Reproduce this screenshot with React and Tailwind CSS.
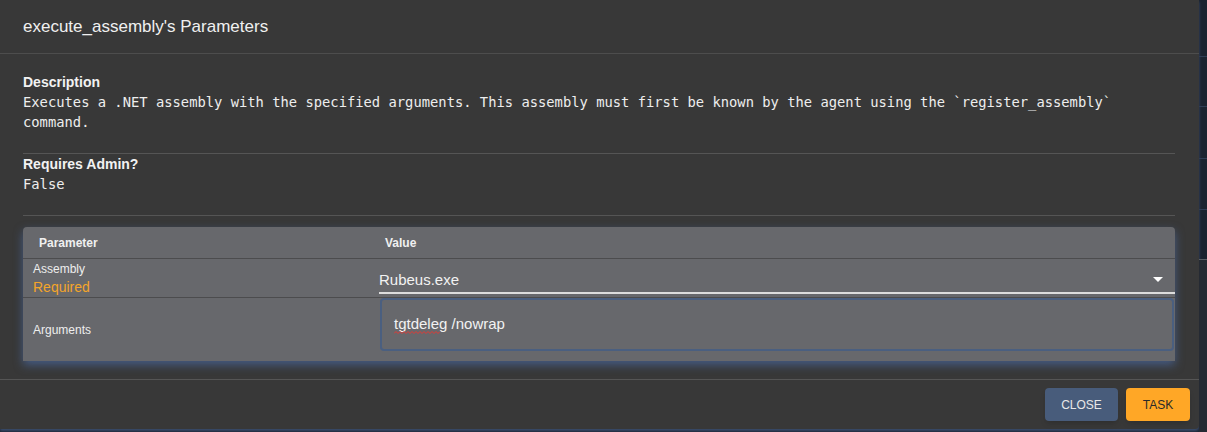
import React from 'react';

const sans = { fontFamily: '"Liberation Sans", Arial, sans-serif' };
const mono = { fontFamily: '"DejaVu Sans Mono", monospace' };

const Divider = () => <div className="h-px bg-[#555555]" />;

// red squiggle from the spell checker
const Squiggle = ({ width }) => (
  <svg className="absolute left-0 top-full -mt-[1px]" width={width} height="3" viewBox={`0 0 ${width} 3`}>
    <path
      d={Array.from({ length: Math.ceil(width / 4) }, (_, i) => `${i === 0 ? 'M' : 'L'}${i * 4} 2.5 L${i * 4 + 2} 0.5`).join(' ')}
      stroke="#e53935"
      strokeWidth="1"
      fill="none"
    />
  </svg>
);

const ParameterTable = () => (
  <div className="rounded-t-[4px] bg-[#67686c] shadow-[0_4px_10px_rgba(72,100,150,0.8)]">
    {/* Header */}
    <div className="flex h-[32px] items-center border-b border-[#4c4c4e] text-[12px] font-bold text-[#f0f0f0]">
      <div className="w-[356px] pl-4">Parameter</div>
      <div className="pl-[6px]">Value</div>
    </div>

    {/* Assembly */}
    <div className="flex h-[39px] border-b border-[#4c4c4e]">
      <div className="flex w-[356px] flex-col pl-[10px] pt-[2px]">
        <span className="text-[12px] leading-[16px] text-[#eeeeee]">Assembly</span>
        <span className="mt-[1px] text-[14px] leading-[18px] text-[#f4a52a]">Required</span>
      </div>
      <div className="mb-[3px] flex flex-1 items-center justify-between border-b-2 border-[#dddddd] pr-3">
        <span className="pt-[10px] text-[15px] text-[#f2f2f2]">Rubeus.exe</span>
        <svg width="10" height="6" viewBox="0 0 10 6" className="mt-[8px]">
          <path d="M0 0h10L5 5z" fill="#ffffff" />
        </svg>
      </div>
    </div>

    {/* Arguments */}
    <div className="flex h-[63px] pb-[10px]">
      <div className="flex w-[356px] items-center pl-[10px] pt-[10px]">
        <span className="text-[12px] text-[#eeeeee]">Arguments</span>
      </div>
      <div className="ml-px mr-px flex flex-1 items-center rounded-[4px] border-2 border-[#4a5f80] pl-3">
        <span className="text-[15px] text-[#f2f2f2]">
          <span className="relative">
            tgtdeleg
            <Squiggle width={48} />
          </span>{' '}
          /nowrap
        </span>
      </div>
    </div>
  </div>
);

export default function App() {
  return (
    <div className="flex h-[432px] w-[1207px] overflow-hidden bg-[#1b2330]" style={sans}>
      {/* Modal */}
      <div className="flex h-[429px] w-[1199px] flex-col rounded-br-[4px] bg-[#383838] shadow-[0_2px_3px_#3c4e6e]">
        {/* Title */}
        <div className="flex h-[54px] items-center border-b border-[#4d4d4d] px-[23px]">
          <h2 className="text-[17px] text-[#f0f0f0]">execute_assembly's Parameters</h2>
        </div>

        {/* Content */}
        <div className="flex flex-1 flex-col px-[23px] pr-[24px] pt-[18px]">
          <div className="text-[14px] font-bold leading-[20px] text-[#f2f2f2]">Description</div>
          <p className="text-[13.8px] leading-[20px] text-[#eeeeee]" style={mono}>
            Executes a .NET assembly with the specified arguments. This assembly must first be known by the agent using the `register_assembly` command.
          </p>

          <div className="mt-[21px]"><Divider /></div>

          <div className="text-[14px] font-bold leading-[20px] text-[#f2f2f2]">Requires Admin?</div>
          <div className="text-[13.8px] leading-[20px] text-[#eeeeee]" style={mono}>False</div>

          <div className="mt-[21px]"><Divider /></div>

          <div className="mt-[11px]">
            <ParameterTable />
          </div>
        </div>

        {/* Footer */}
        <div className="flex h-[50px] items-center justify-end gap-2 border-t border-[#555555] pr-[9px]">
          <button className="h-[33px] w-[73px] rounded-[4px] bg-[#485c7b] text-[12px] text-[#e8e8e8] shadow-md">CLOSE</button>
          <button className="h-[33px] w-[64px] rounded-[4px] bg-[#ffa726] text-[12px] text-[#2a2a2a] shadow-md">TASK</button>
        </div>
      </div>

      {/* Background strip */}
      <div className="flex flex-1 flex-col">
        <div className="h-[57px] border-b border-[#2f3d55]" />
        <div className="h-[50px] border-b border-[#2f3d55]" />
        <div className="h-[52px] border-b border-[#2f3d55]" />
        <div className="h-[51px] border-b border-[#2f3d55]" />
        <div className="h-[50px] border-b border-[#5a5f66]" />
        <div className="flex-1 bg-[#252a33]" />
      </div>
    </div>
  );
}
